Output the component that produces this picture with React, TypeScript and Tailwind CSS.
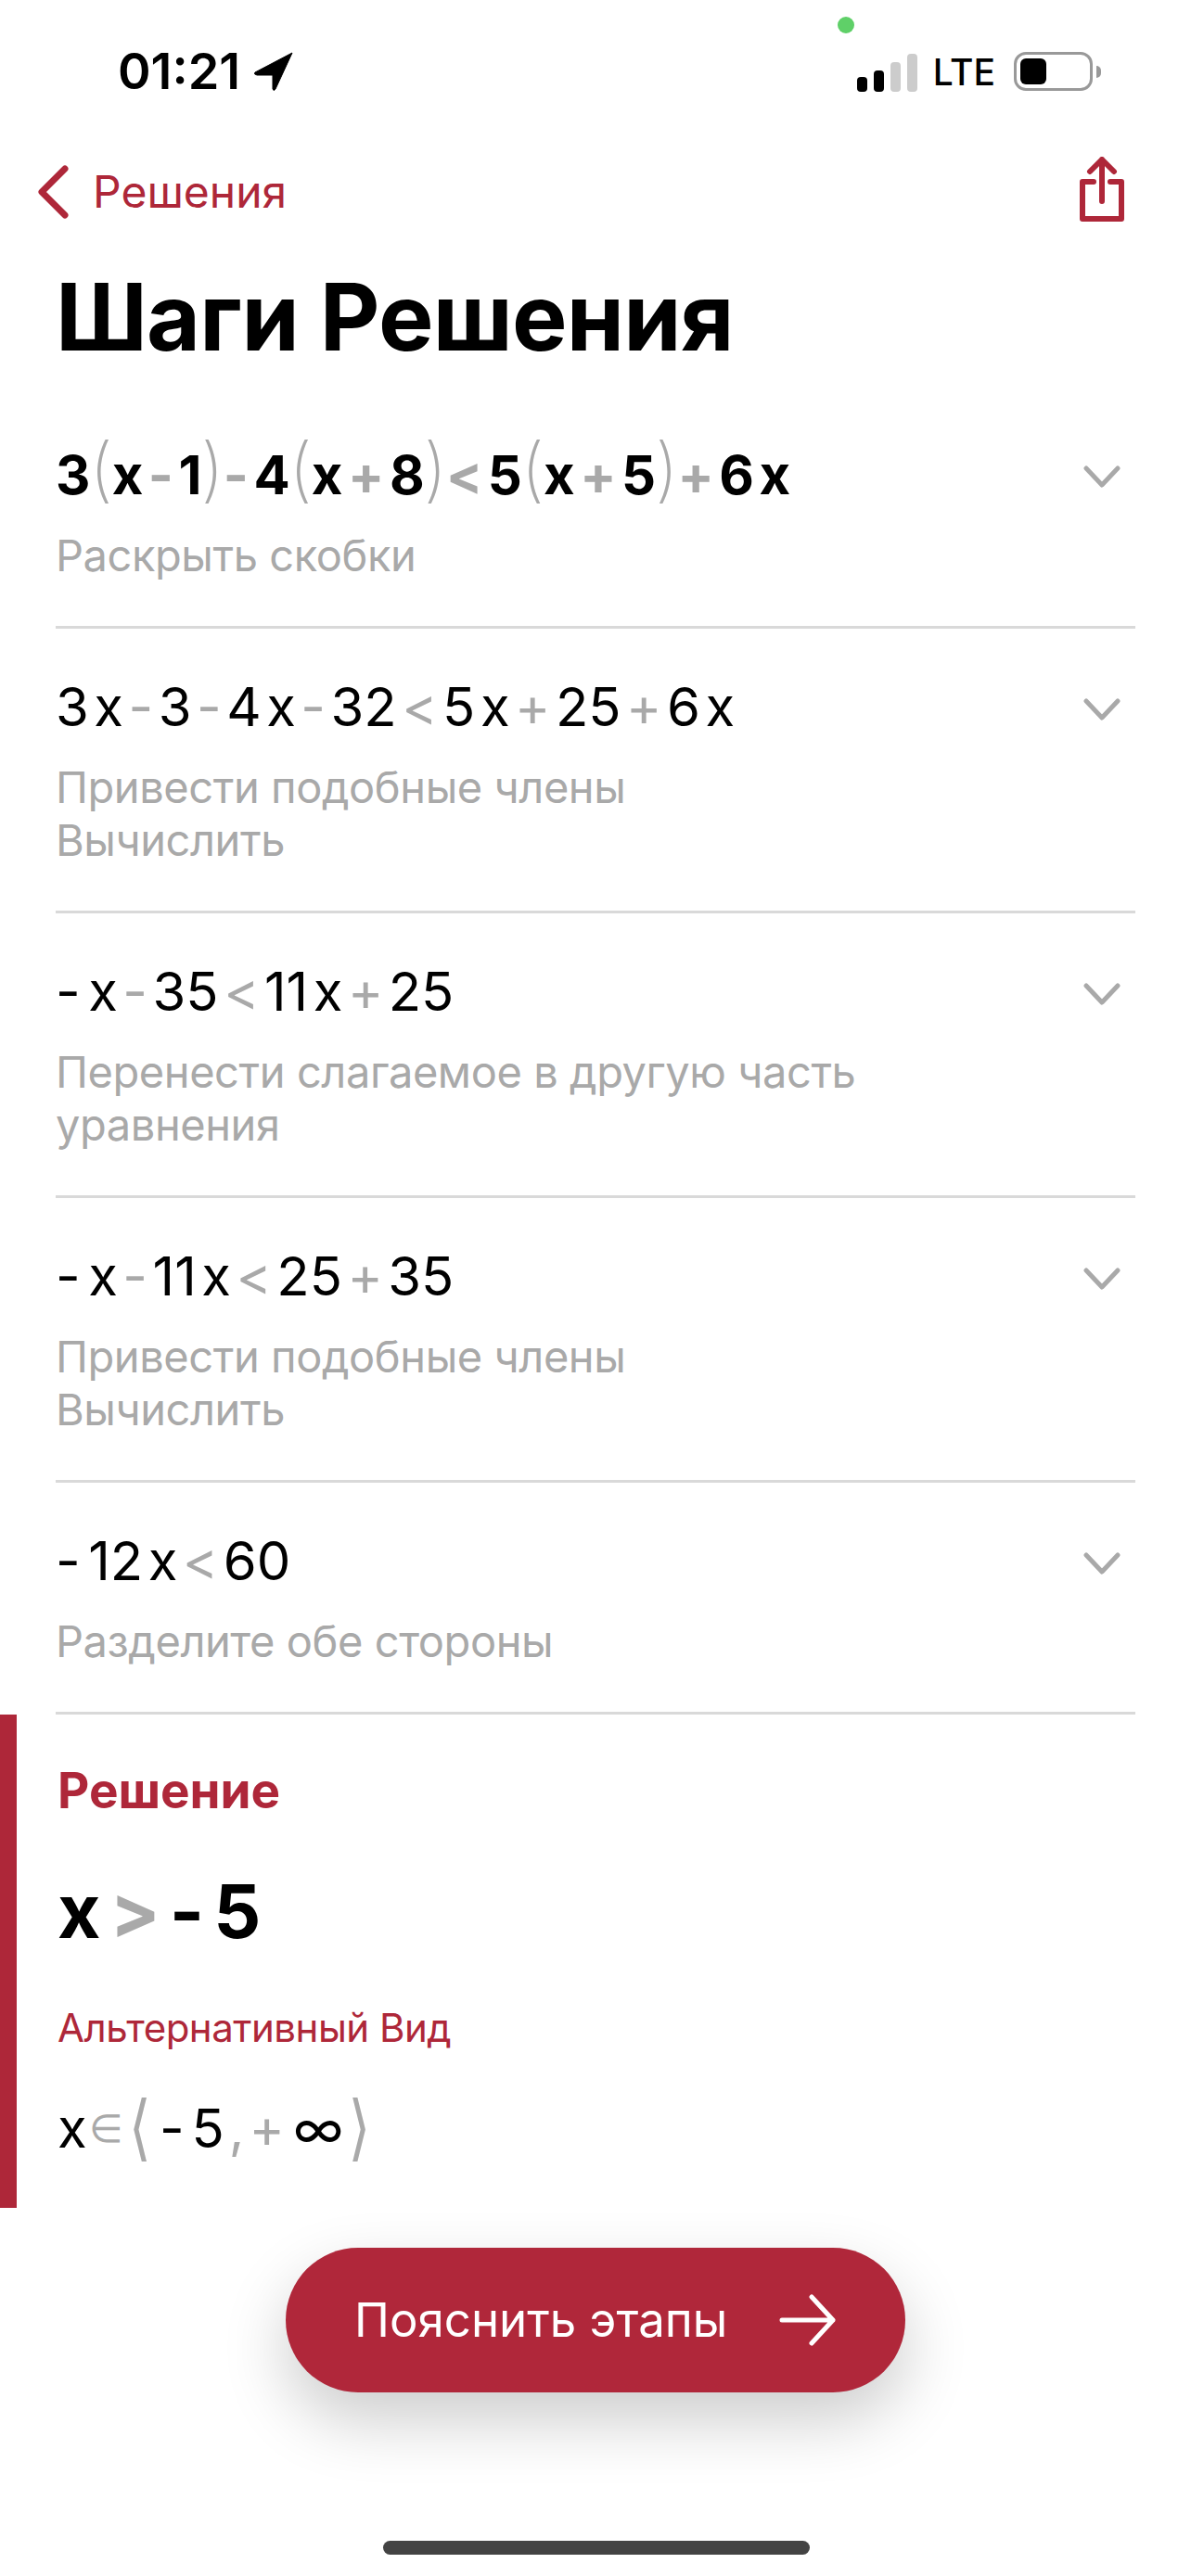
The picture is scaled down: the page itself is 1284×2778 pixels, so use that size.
const RED = "#ae2739";

function MathLine({ tokens, bold = false }: { tokens: string[]; bold?: boolean }) {
  return (
    <div className={`flex items-baseline gap-[5.5px] text-[58px] leading-[70px] ${bold ? "font-bold" : "font-normal"}`}>
      {tokens.map((t, i) => {
        if (t === "(" || t === ")") {
          return (
            <span key={i} className="-mx-[6.5px] text-[76px] font-extralight leading-[58px] text-[#a9a9a9]">
              {t}
            </span>
          );
        }
        // a leading minus is part of the number, so it stays black
        if (i === 0 && t === "-") {
          return (
            <span key={i} className="mr-[3px] text-black">
              {t}
            </span>
          );
        }
        const gray = /^[-+<]$/.test(t);
        return (
          <span key={i} className={gray ? "text-[#a9a9a9]" : "text-black"}>
            {t}
          </span>
        );
      })}
    </div>
  );
}

function Chevron() {
  return (
    <svg width="40" height="24" viewBox="0 0 40 24" fill="none" className="mt-[26px] shrink-0">
      <path d="M3 3 L20 21 L37 3" stroke="#a9a9a9" strokeWidth="5" strokeLinecap="round" strokeLinejoin="round" />
    </svg>
  );
}

function Step({ tokens, notes, bold }: { tokens: string[]; notes: string[]; bold?: boolean }) {
  return (
    <div className="mx-[60px] border-b-[3px] border-[#d9d9d9] pb-[48px] pt-[49px]">
      <div className="flex items-start justify-between pr-[16px]">
        <MathLine tokens={tokens} bold={bold} />
        <Chevron />
      </div>
      <div className="mt-[23px] text-[47px] leading-[57px] tracking-[-0.43px] text-[#a9a9a9]">
        {notes.map((n) => (
          <div key={n}>{n}</div>
        ))}
      </div>
    </div>
  );
}

export default function App() {
  return (
    <div className="relative h-[2778px] w-[1284px] overflow-hidden bg-white font-['Inter',sans-serif]">
      {/* status bar */}
      <div className="absolute left-[903px] top-[18px] h-[18px] w-[18px] rounded-full bg-[#5fd068]" />
      <div className="flex h-[150px] items-start justify-between pl-[127px] pr-[97px] pt-[45px]">
        <div className="flex items-center gap-[15px]">
          <span className="text-[54px] font-semibold leading-[64px] text-black">01:21</span>
          <svg width="42" height="42" viewBox="0 0 42 42">
            <path d="M41 1 L1 22 Q-1 24 3 25 L20 25 L20 40 Q21 43 23 40 Z" fill="#000" stroke="#000" strokeWidth="1" strokeLinejoin="round" />
          </svg>
        </div>
        <div className="flex items-center pt-[10px]">
          <div className="mt-[2px] flex h-[41px] items-end gap-[7px]">
            <div className="h-[16px] w-[11px] rounded-[4px] bg-black" />
            <div className="h-[23px] w-[11px] rounded-[4px] bg-black" />
            <div className="h-[32px] w-[11px] rounded-[4px] bg-[#cccccc]" />
            <div className="h-[41px] w-[11px] rounded-[4px] bg-[#cccccc]" />
          </div>
          <span className="ml-[17px] mt-[2px] text-[39px] font-medium leading-[42px] text-black">LTE</span>
          <div className="ml-[20px] h-[42px] w-[85px] rounded-[13px] border-[3px] border-[#999999] p-[4px]">
            <div className="h-full w-[28px] rounded-[6px] bg-black" />
          </div>
          <div className="ml-[4px] h-[13px] w-[5px] rounded-r-full bg-[#999999]" />
        </div>
      </div>

      {/* nav */}
      <div className="flex h-[100px] items-center justify-between pl-[40px] pr-[72px] pt-[14px]">
        <div className="flex items-center gap-[26px]">
          <svg width="34" height="58" viewBox="0 0 34 58" fill="none">
            <path d="M30 4 L5 29 L30 54" stroke={RED} strokeWidth="7" strokeLinecap="round" strokeLinejoin="round" />
          </svg>
          <span className="text-[48px] leading-[58px] text-[#ae2739]">Решения</span>
        </div>
        <svg width="48" height="70" viewBox="0 0 48 70" fill="none" className="mb-[6px]">
          <path d="M15 27 H3 V67 H45 V27 H33" stroke={RED} strokeWidth="6" strokeLinecap="round" strokeLinejoin="round" />
          <path d="M24 48 V3 M11 16 L24 3 L37 16" stroke={RED} strokeWidth="6" strokeLinecap="round" strokeLinejoin="round" />
        </svg>
      </div>

      {/* title */}
      <h1 className="mb-[25px] mt-[32px] pl-[60px] text-[100px] font-bold leading-[120px] tracking-[-0.8px] text-black">Шаги Решения</h1>

      {/* steps */}
      <Step
        bold
        tokens={["3", "(", "x", "-", "1", ")", "-", "4", "(", "x", "+", "8", ")", "<", "5", "(", "x", "+", "5", ")", "+", "6", "x"]}
        notes={["Раскрыть скобки"]}
      />
      <Step
        tokens={["3", "x", "-", "3", "-", "4", "x", "-", "32", "<", "5", "x", "+", "25", "+", "6", "x"]}
        notes={["Привести подобные члены", "Вычислить"]}
      />
      <Step
        tokens={["-", "x", "-", "35", "<", "11", "x", "+", "25"]}
        notes={["Перенести слагаемое в другую часть", "уравнения"]}
      />
      <Step
        tokens={["-", "x", "-", "11", "x", "<", "25", "+", "35"]}
        notes={["Привести подобные члены", "Вычислить"]}
      />
      <Step tokens={["-", "12", "x", "<", "60"]} notes={["Разделите обе стороны"]} />

      {/* solution */}
      <div className="h-[532px] border-l-[18px] border-[#ae2739] pl-[44px] pt-[52px]">
        <div className="text-[53px] font-bold leading-[60px] text-[#ae2739]">Решение</div>
        <div className="mt-[52px] flex items-baseline gap-[10px] text-[80px] font-bold leading-[96px]">
          <span>x</span>
          <span className="text-[#a9a9a9]">&gt;</span>
          <span>-</span>
          <span>5</span>
        </div>
        <div className="mt-[53px] text-[42px] leading-[50px] tracking-[-0.5px] text-[#ae2739]">Альтернативный Вид</div>
        <div className="mt-[48px] flex h-[70px] items-center text-[58px] leading-[70px]">
          <span>x</span>
          <span className="ml-[2px] text-[42px] font-light text-[#a9a9a9]">∈</span>
          <span className="ml-[6px] scale-y-125 font-['DejaVu_Sans'] text-[62px] text-[#a9a9a9]">⟨</span>
          <span className="ml-[9px]">-</span>
          <span className="ml-[8px]">5</span>
          <span className="ml-[5px] text-[#a9a9a9]">,</span>
          <span className="ml-[5px] text-[#a9a9a9]">+</span>
          <span className="ml-[9px]">∞</span>
          <span className="ml-[5px] scale-y-125 font-['DejaVu_Sans'] text-[62px] text-[#a9a9a9]">⟩</span>
        </div>
      </div>

      {/* floating button */}
      <button className="absolute left-[308px] top-[2424px] flex h-[156px] w-[668px] items-center justify-between rounded-full bg-[#b0273a] pl-[74px] pr-[74px] shadow-[0_30px_70px_rgba(0,0,0,0.2)]">
        <span className="text-[51px] leading-[58px] text-white">Пояснить этапы</span>
        <svg width="62" height="56" viewBox="0 0 62 56" fill="none">
          <path d="M3 28 H58 M35 3 L58 28 L35 53" stroke="#fff" strokeWidth="5" strokeLinecap="round" strokeLinejoin="round" />
        </svg>
      </button>

      {/* home indicator */}
      <div className="absolute left-[413px] top-[2740px] h-[15px] w-[460px] rounded-full bg-[#434343]" />
    </div>
  );
}
